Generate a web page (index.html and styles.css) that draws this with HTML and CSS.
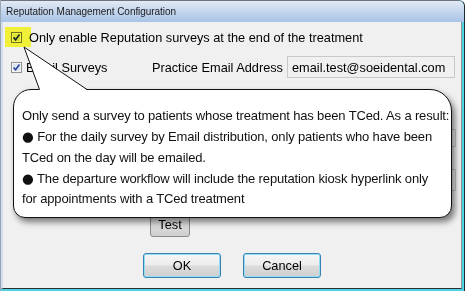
FILE: index.html
```html
<!DOCTYPE html>
<html>
<head>
<meta charset="utf-8">
<link rel="stylesheet" href="styles.css">
</head>
<body>
<div class="window">
  <div class="titlebar">Reputation Management Configuration</div>
  <div class="client">
    <div class="row row1">
      <svg class="cb" viewBox="0 0 11 11" width="11" height="11"><rect x="0.5" y="0.5" width="10" height="10" fill="#f4f4f4" stroke="#6f7378"/><rect x="2" y="2" width="7" height="7" fill="#dde4ee"/><path d="M2.6 5.4 L4.6 7.8 L8.5 2.5" fill="none" stroke="#1b2f86" stroke-width="1.7"/></svg>
      <span class="label first">Only enable Reputation surveys at the end of the treatment</span>
      <span class="highlight"></span>
    </div>
    <div class="row row2">
      <svg class="cb" viewBox="0 0 11 11" width="11" height="11"><rect x="0.5" y="0.5" width="10" height="10" fill="#f4f4f4" stroke="#8e939a"/><rect x="2" y="2" width="7" height="7" fill="#dde4ee"/><path d="M2.6 5.4 L4.6 7.8 L8.5 2.5" fill="none" stroke="#2a44a0" stroke-width="1.6"/></svg>
      <span class="label email">Email Surveys</span>
      <span class="label practice">Practice Email Address</span>
      <div class="input">email.test@soeidental.com</div>
    </div>
    <div class="hidden-fields">
      <div class="box b1"></div>
      <div class="box b2"></div>
    </div>
    <div class="test-row"><div class="btn test">Test</div></div>
    <div class="actions">
      <div class="btn main">OK</div>
      <div class="btn main">Cancel</div>
    </div>
  </div>
  <div class="callout">
    <p>Only send a survey to patients whose treatment has been TCed. As a result:<br><span class="bullet">●</span> For the daily survey by Email distribution, only patients who have been<br>TCed on the day will be emailed.<br><span class="bullet">●</span> The departure workflow will include the reputation kiosk hyperlink only<br>for appointments with a TCed treatment</p>
  </div>
  <svg class="tail" width="90" height="96" viewBox="0 0 90 96">
    <polygon points="24,47 39.5,90 87,90" fill="#fff"/>
    <polyline points="39.5,89.5 24,47 87,89.5" fill="none" stroke="#111" stroke-width="1"/>
  </svg>
</div>
</body>
</html>
```

FILE: styles.css
```css
html, body {
  margin: 0;
  padding: 0;
  background: #ffffff;
}

.window {
  position: relative;
  box-sizing: border-box;
  width: 465px;
  height: 291px;
  border-top: 1px solid #6d7680;
  border-left: 1px solid #9aa6b4;
  border-right: 1px solid #1f2a33;
  border-top-right-radius: 6px;
  background: #4fd2e2;
  display: flex;
  flex-direction: column;
  font-family: "Liberation Sans", Arial, sans-serif;
  color: #000;
  overflow: hidden;
}

.titlebar {
  height: 21px;
  flex: none;
  display: flex;
  align-items: center;
  padding-left: 5px;
  font-size: 10px;
  letter-spacing: -0.05px;
  color: #1b1b1b;
  background: linear-gradient(#e2eaf5, #c6d7ee 45%, #a9c4e7);
  border-top-right-radius: 5px;
}

.client {
  box-sizing: border-box;
  height: 267px;
  flex: none;
  margin-right: 2px;
  background: #f0f0f0;
  border-left: 2px solid #d3deec;
  border-right: 1px solid #8c9196;
  border-bottom: 1px solid #2a2f33;
  display: flex;
  flex-direction: column;
  font-size: 12.75px;
}

.row {
  display: flex;
  align-items: center;
  position: relative;
}

.row1 {
  margin-top: 5px;
  height: 20px;
  padding-left: 8px;
}

.row1 .first {
  margin-left: 7px;
}

.highlight {
  position: absolute;
  left: 2px;
  top: 0;
  width: 26px;
  height: 20px;
  background: #ffff3c;
  mix-blend-mode: multiply;
}

.row2 {
  margin-top: 9px;
  height: 22px;
  padding-left: 8px;
  padding-right: 6px;
}

.cb {
  display: block;
  flex: none;
}

.email {
  margin-left: 4px;
}

.practice {
  margin-left: auto;
  margin-right: 4px;
}

.input {
  box-sizing: border-box;
  width: 168px;
  height: 22px;
  border: 1px solid #c9c9c9;
  background: #f0f0f0;
  padding-left: 4px;
  display: flex;
  align-items: center;
  font-size: 12.75px;
}

.hidden-fields {
  display: flex;
  flex-direction: column;
  align-items: flex-end;
  padding-right: 5px;
}

.box {
  box-sizing: border-box;
  width: 200px;
  border: 1px solid #c6c6c6;
  background: #f0f0f0;
}

.b1 {
  margin-top: 51px;
  height: 18px;
}

.b2 {
  margin-top: 22px;
  height: 22px;
}

.test-row {
  margin-top: 21px;
  padding-left: 147px;
  display: flex;
}

.btn {
  box-sizing: border-box;
  height: 25px;
  display: flex;
  align-items: center;
  justify-content: center;
  border-radius: 3px;
  font-size: 12.75px;
}

.test {
  width: 40px;
  border: 1px solid #8a8a8a;
  background: linear-gradient(#ececec, #dcdcdc 50%, #cfcfcf);
}

.actions {
  margin-top: 16px;
  display: flex;
  justify-content: center;
  gap: 22px;
}

.main {
  width: 78px;
  border: 1px solid #3c7fb1;
  box-shadow: inset 0 0 0 1px #8fe0f4;
  background: linear-gradient(#f6f6f6, #ececec 48%, #dcdcdc 52%, #cfcfcf);
}

.callout {
  position: absolute;
  left: 12px;
  top: 88px;
  box-sizing: border-box;
  width: 439px;
  height: 129px;
  background: #ffffff;
  border: 1px solid #111;
  border-radius: 18px 22px 12px 12px;
  box-shadow: 3px 4px 6px rgba(0, 0, 0, 0.5);
  padding: 16px 0 0 8px;
}

.callout p {
  margin: 0;
  font-family: "Liberation Sans", Arial, sans-serif;
  font-size: 13px;
  letter-spacing: -0.15px;
  line-height: 20.25px;
  color: #111;
  white-space: nowrap;
}

.bullet {
  font-family: "DejaVu Sans", sans-serif;
  font-size: 13.5px;
  letter-spacing: 0;
}

.tail {
  position: absolute;
  left: -1px;
  top: -1px;
}
```
